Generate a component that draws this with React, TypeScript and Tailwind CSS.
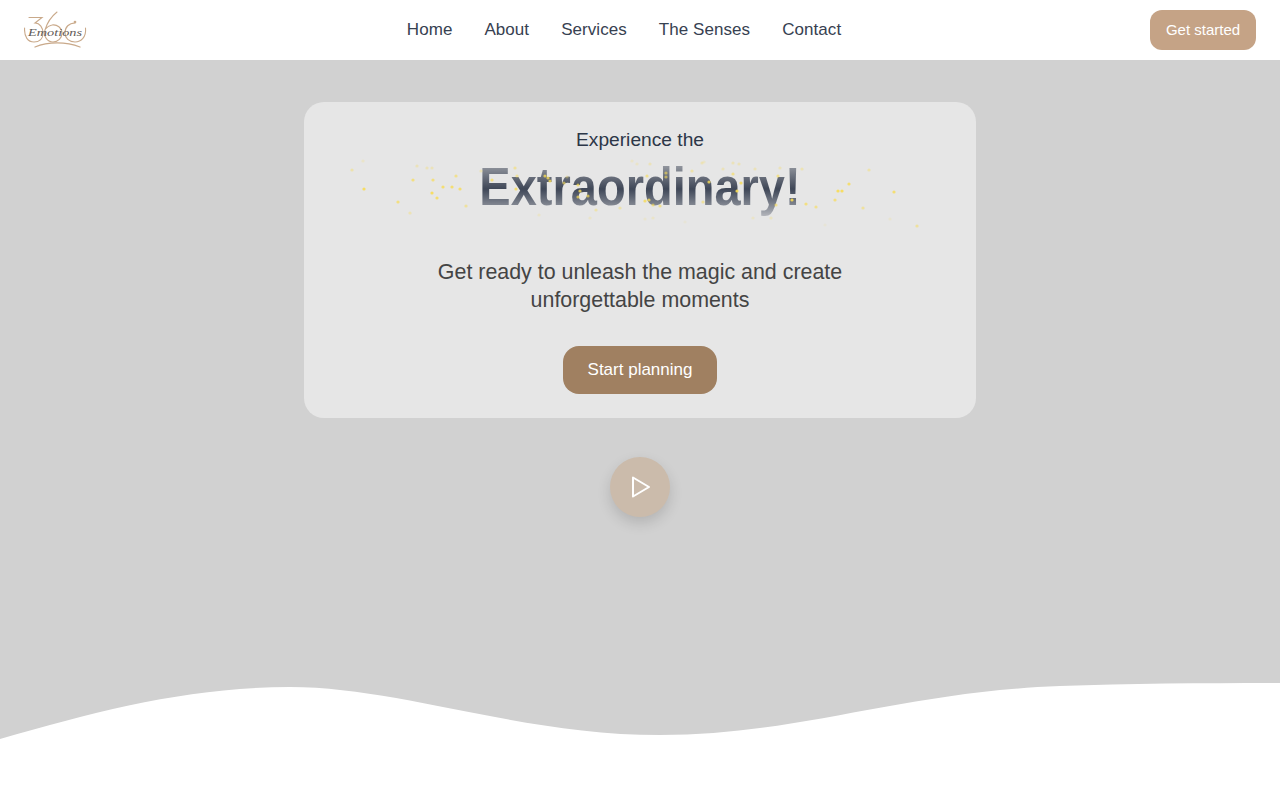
import React from 'react';

const NAV_LINKS = ['Home', 'About', 'Services', 'The Senses', 'Contact'];

// sparkle positions, relative to the hero card: [x, y, opacity]
const SPARKLES: [number, number, number][] = [
  [60, 87, 0.9], [94, 100, 0.7], [109, 78, 0.7], [129, 78, 0.7], [128, 91, 0.9], [133, 96, 0.8],
  [139, 85, 0.8], [148, 85, 0.8], [156, 87, 0.8], [152, 74, 0.6], [162, 104, 0.5], [106, 111, 0.35],
  [48, 68, 0.4], [59, 59, 0.2], [113, 64, 0.3], [123, 66, 0.3], [128, 66, 0.3], [177, 69, 0.3],
  [188, 78, 0.7], [212, 87, 0.8], [211, 66, 0.5], [213, 74, 0.5], [241, 74, 0.8], [244, 76, 0.8],
  [246, 79, 0.8], [260, 81, 0.6], [263, 75, 0.3], [274, 83, 0.7], [276, 89, 0.8], [274, 95, 0.7],
  [284, 94, 0.7], [292, 108, 0.4], [286, 116, 0.2], [316, 106, 0.4], [235, 113, 0.2], [328, 59, 0.2],
  [333, 62, 0.2], [346, 62, 0.3], [343, 74, 0.6], [362, 71, 0.6], [362, 75, 0.6], [398, 61, 0.3],
  [400, 60, 0.2], [388, 69, 0.4], [419, 67, 0.3], [429, 61, 0.3], [435, 62, 0.3], [429, 72, 0.6],
  [451, 67, 0.3], [476, 66, 0.3], [498, 67, 0.35], [474, 74, 0.6], [405, 80, 0.8], [437, 81, 0.8],
  [433, 89, 0.9], [399, 100, 0.5], [341, 99, 0.8], [345, 98, 0.8], [349, 103, 0.6], [356, 104, 0.6],
  [472, 103, 0.6], [488, 98, 0.9], [502, 102, 0.7], [512, 105, 0.6], [449, 116, 0.2], [467, 116, 0.25],
  [341, 117, 0.15], [349, 116, 0.2], [381, 120, 0.1], [545, 82, 0.8], [534, 89, 0.9], [538, 89, 0.9],
  [531, 98, 0.7], [590, 90, 0.8], [559, 106, 0.5], [565, 68, 0.4], [586, 117, 0.15], [613, 124, 0.5],
  [521, 123, 0.1],
];

const Logo = () => (
  <svg width="64" height="40" viewBox="0 0 64 40" fill="none" className="text-[#c9a98a]">
    <g stroke="currentColor" strokeWidth="1.1" strokeLinecap="round">
      <path d="M5 7.5 H18 L11 13 C16 13 19 18 19 23 C19 29 15 32 10 32 C4 32 0 27 0.6 18" />
      <path d="M33 2 C28 6 23 13 21 20 C19 27 24 32 29 32 C34 32 38 28 38 23 C38 18 33 14 28 15 C25 15.5 23 17 21.5 19" />
      <path d="M41 23 C41 17 45 13 51 13 M61.5 18 C62.5 27 57 32 51 32 C45 32 41 28 41 23" />
      <circle cx="51" cy="12" r="0.8" />
      <path d="M11 37 C24 31.5 42 31.5 56 37" strokeWidth="1.3" />
    </g>
    <text x="4" y="26" fontFamily="'Liberation Serif', serif" fontStyle="italic" fontSize="10" textLength="54" lengthAdjust="spacingAndGlyphs" fill="#5f5a56">
      Emotions
    </text>
  </svg>
);

const App: React.FC = () => {
  return (
    <div className="flex h-[800px] flex-col overflow-hidden bg-white font-['Liberation_Sans',Arial,sans-serif]">
      <header className="flex h-[60px] shrink-0 items-center justify-between bg-white px-6">
        <div className="w-[74px]">
          <Logo />
        </div>
        <nav className="flex gap-8 text-[17px] tracking-[0.06px] text-[#374151]">
          {NAV_LINKS.map(link => (
            <a key={link} href="#">{link}</a>
          ))}
        </nav>
        <button className="h-10 w-[106px] rounded-xl bg-[#c5a386] text-[15px] text-white">Get started</button>
      </header>

      <main className="relative flex flex-1 flex-col items-center bg-[#d1d1d1] pt-[42px]">
        <div className="relative flex h-[316px] w-[672px] flex-col items-center rounded-[20px] bg-[#e6e6e6] pt-[26px]">
          <p className="text-[19.2px] leading-6 text-[#2d3748]">Experience the</p>
          <h1 className="mt-[7px] scale-y-[1.16] bg-gradient-to-b from-[#c0c1c4] via-[#3f4757] to-[#d8d8da] bg-clip-text pb-1 text-[47px] leading-[56px] font-bold text-transparent blur-[0.4px]">
            Extraordinary!
          </h1>
          <p className="mt-[39px] w-[440px] text-center text-[21.4px] leading-7 text-[#444444]">
            Get ready to unleash the magic and create unforgettable moments
          </p>
          <button className="mt-[32px] h-[48px] w-[154px] rounded-2xl bg-[#a08061] text-[17px] text-white">Start planning</button>
          <svg className="pointer-events-none absolute inset-0 blur-[0.5px]" width="672" height="316" viewBox="0 0 672 316">
            {SPARKLES.map(([x, y, o]) => (
              <circle key={`${x}-${y}`} cx={x} cy={y} r="1.6" fill="#f8dc55" opacity={o} />
            ))}
          </svg>
        </div>

        <button className="mt-[39px] flex size-[60px] items-center justify-center rounded-full bg-[#cbbbab] shadow-[0_6px_14px_rgba(0,0,0,0.14)]">
          <svg width="20" height="22" viewBox="0 0 20 22" fill="none" className="ml-[2px]">
            <path d="M2 1.5 L18 11 L2 20.5 Z" stroke="white" strokeWidth="2" strokeLinejoin="round" />
          </svg>
        </button>

        <svg className="absolute bottom-0 left-0" width="1280" height="120" viewBox="0 0 1280 120" fill="white">
          <path d="M0 59 C100 30 190 7 290 7 C400 7 520 55 660 55 C800 55 900 12 1060 6 C1130 3.4 1210 3 1280 3 V120 H0 Z" />
        </svg>
      </main>
    </div>
  );
};

export default App;
